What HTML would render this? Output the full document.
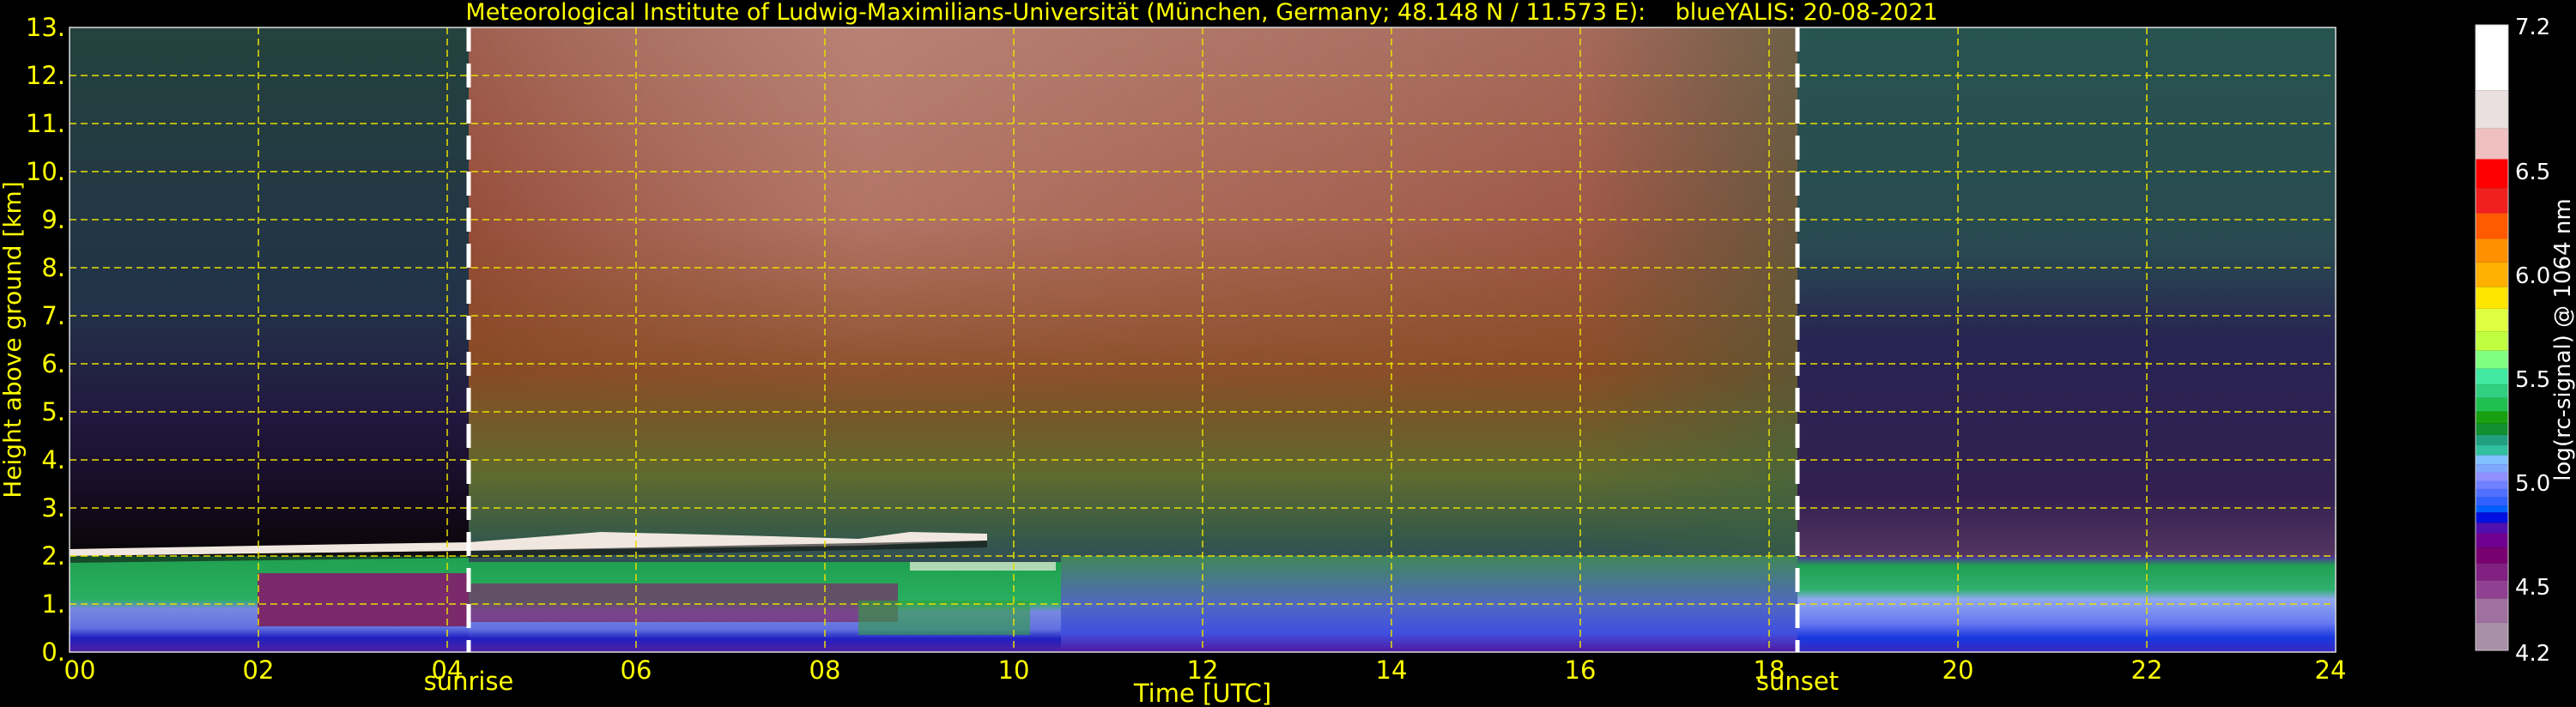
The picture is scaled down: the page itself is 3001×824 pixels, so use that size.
<!DOCTYPE html>
<html><head><meta charset="utf-8"><style>
html,body{margin:0;padding:0;background:#000;width:3001px;height:824px;overflow:hidden}
svg{position:absolute;left:0;top:0}
text{font-family:"DejaVu Sans","Liberation Sans",sans-serif}
</style></head><body>
<svg width="3001" height="824" viewBox="0 0 3001 824">
<defs>
<linearGradient id="gL" x1="0" y1="0" x2="0" y2="1">
<stop offset="0" stop-color="#24423e"/><stop offset="0.45" stop-color="#223248"/>
<stop offset="0.62" stop-color="#221840"/><stop offset="0.75" stop-color="#160c22"/>
<stop offset="0.83" stop-color="#0c060c"/><stop offset="1" stop-color="#0c060c"/>
</linearGradient>
<linearGradient id="gD" x1="0" y1="0" x2="0" y2="1">
<stop offset="0" stop-color="#a06050"/><stop offset="0.3" stop-color="#984e3c"/>
<stop offset="0.55" stop-color="#884a24"/><stop offset="0.72" stop-color="#5e6a30"/>
<stop offset="0.82" stop-color="#34584a"/><stop offset="0.9" stop-color="#303e68"/>
<stop offset="1" stop-color="#303e68"/>
</linearGradient>
<linearGradient id="gW" x1="0" y1="0" x2="1" y2="0">
<stop offset="0" stop-color="#fff" stop-opacity="0"/><stop offset="0.3" stop-color="#f0d0c8" stop-opacity="0.3"/>
<stop offset="0.55" stop-color="#f0d0c8" stop-opacity="0.2"/><stop offset="1" stop-color="#fff" stop-opacity="0"/>
</linearGradient>
<linearGradient id="mV" x1="0" y1="0" x2="0" y2="1">
<stop offset="0" stop-color="#fff"/><stop offset="0.5" stop-color="#fff"/><stop offset="1" stop-color="#000"/>
</linearGradient>
<mask id="mk" maskUnits="userSpaceOnUse" x="546" y="32" width="1548" height="450">
<rect x="546" y="32" width="1548" height="450" fill="url(#mV)"/>
</mask>
<linearGradient id="gT" x1="0" y1="0" x2="1" y2="0">
<stop offset="0" stop-color="#3a6040" stop-opacity="0"/><stop offset="1" stop-color="#3a6040" stop-opacity="0.5"/>
</linearGradient>
<linearGradient id="gR" x1="0" y1="0" x2="0" y2="1">
<stop offset="0" stop-color="#285450"/><stop offset="0.35" stop-color="#284a50"/>
<stop offset="0.5" stop-color="#282452"/><stop offset="0.75" stop-color="#322050"/>
<stop offset="0.88" stop-color="#603c66"/><stop offset="1" stop-color="#684068"/>
</linearGradient>
<linearGradient id="gLB" x1="0" y1="0" x2="0" y2="1">
<stop offset="0" stop-color="#20a050"/><stop offset="0.45" stop-color="#28b060"/>
<stop offset="0.55" stop-color="#7888e0"/><stop offset="0.75" stop-color="#6070e0"/>
<stop offset="0.85" stop-color="#2020c0"/><stop offset="1" stop-color="#5020a0"/>
</linearGradient>
<linearGradient id="gDB" x1="0" y1="0" x2="0" y2="1">
<stop offset="0" stop-color="#408858"/><stop offset="0.5" stop-color="#5068c0"/>
<stop offset="0.8" stop-color="#4050e0"/><stop offset="1" stop-color="#5018a0"/>
</linearGradient>
<linearGradient id="gRB" x1="0" y1="0" x2="0" y2="1">
<stop offset="0" stop-color="#5028a0"/><stop offset="0.1" stop-color="#20a050"/>
<stop offset="0.35" stop-color="#30b070"/><stop offset="0.45" stop-color="#90a8f0"/>
<stop offset="0.7" stop-color="#6878f0"/><stop offset="0.85" stop-color="#1838e0"/><stop offset="1" stop-color="#3828c0"/>
</linearGradient>
</defs>
<rect x="81" y="32" width="465" height="728" fill="url(#gL)"/>
<rect x="546" y="32" width="1548" height="728" fill="url(#gD)"/>
<rect x="546" y="32" width="1548" height="450" fill="url(#gW)" mask="url(#mk)"/>
<rect x="1850" y="32" width="244" height="728" fill="url(#gT)"/>
<rect x="2094" y="32" width="627" height="728" fill="url(#gR)"/>
<rect x="81" y="648" width="465" height="112" fill="url(#gLB)"/>
<rect x="300" y="668" width="246" height="62" fill="#7a2a6a"/>
<rect x="546" y="655" width="690" height="105" fill="url(#gLB)"/>
<rect x="546" y="680" width="500" height="45" fill="#7a2a6a" opacity="0.7"/>
<rect x="1000" y="700" width="200" height="40" fill="#30a040" opacity="0.6"/>
<rect x="1236" y="648" width="858" height="112" fill="url(#gDB)"/>
<rect x="2094" y="648" width="627" height="112" fill="url(#gRB)"/>
<path d="M81 640 L300 636 L546 632 L700 620 L900 625 L1000 628 L1060 620 L1150 622 L1150 630 L1000 636 L546 642 L300 645 L81 648Z" fill="#f0e8e0"/>
<path d="M81 648 L546 642 L1150 630 L1150 638 L546 650 L81 656Z" fill="#101010" opacity="0.6"/>
<rect x="1060" y="655" width="170" height="10" fill="#f0f0e0" opacity="0.7"/>
<g stroke="#e8e000" stroke-width="1.5" stroke-dasharray="8,5" fill="none">
<path d="M81 88H2721M81 144H2721M81 200H2721M81 256H2721M81 312H2721M81 368H2721M81 424H2721M81 480H2721M81 536H2721M81 592H2721M81 648H2721M81 704H2721"/>
<path d="M301 32V760M521 32V760M741 32V760M961 32V760M1181 32V760M1401 32V760M1621 32V760M1841 32V760M2061 32V760M2281 32V760M2501 32V760"/>
</g>
<rect x="81" y="32" width="2640" height="728" fill="none" stroke="#ddd" stroke-width="1.5"/>
<g stroke="#fff" stroke-width="5" stroke-dasharray="28,14"><path d="M546 32V760M2094 32V760"/></g>
<text x="1400" y="23" fill="#ffff00" font-size="27" text-anchor="middle" xml:space="preserve">Meteorological Institute of Ludwig-Maximilians-Universität (München, Germany; 48.148 N / 11.573 E):    blueYALIS: 20-08-2021</text>
<g fill="#ffff00" font-size="29" text-anchor="end">
<text x="76" y="42">13.</text><text x="76" y="98">12.</text><text x="76" y="154">11.</text><text x="76" y="210">10.</text>
<text x="76" y="266">9.</text><text x="76" y="322">8.</text><text x="76" y="378">7.</text><text x="76" y="434">6.</text>
<text x="76" y="490">5.</text><text x="76" y="546">4.</text><text x="76" y="602">3.</text><text x="76" y="658">2.</text>
<text x="76" y="714">1.</text><text x="76" y="770">0.</text>
</g>
<text transform="translate(24,396) rotate(-90)" fill="#ffff00" font-size="28" text-anchor="middle">Height above ground [km]</text>
<g fill="#ffff00" font-size="29" text-anchor="middle">
<text x="93" y="791">00</text><text x="301" y="791">02</text><text x="521" y="791">04</text><text x="741" y="791">06</text>
<text x="961" y="791">08</text><text x="1181" y="791">10</text><text x="1401" y="791">12</text><text x="1621" y="791">14</text>
<text x="1841" y="791">16</text><text x="2061" y="791">18</text><text x="2281" y="791">20</text><text x="2501" y="791">22</text><text x="2715" y="791">24</text>
<text x="546" y="804">sunrise</text><text x="2094" y="804">sunset</text>
<text x="1401" y="818">Time [UTC]</text>
</g>
<svg x="2884" y="29" width="38" height="729" viewBox="0 55 1 1388" preserveAspectRatio="none">
<rect x="0" y="55" width="1" height="145" fill="#ffffff"/>
<rect x="0" y="200" width="1" height="85" fill="#ebe0e0"/>
<rect x="0" y="285" width="1" height="68" fill="#f0c0c0"/>
<rect x="0" y="353" width="1" height="64" fill="#ff0000"/>
<rect x="0" y="417" width="1" height="56" fill="#f02020"/>
<rect x="0" y="473" width="1" height="57" fill="#ff5a00"/>
<rect x="0" y="530" width="1" height="52" fill="#ff9000"/>
<rect x="0" y="582" width="1" height="55" fill="#ffb000"/>
<rect x="0" y="637" width="1" height="48" fill="#ffe600"/>
<rect x="0" y="685" width="1" height="50" fill="#e0ff40"/>
<rect x="0" y="735" width="1" height="43" fill="#c0ff40"/>
<rect x="0" y="778" width="1" height="40" fill="#80ff80"/>
<rect x="0" y="818" width="1" height="35" fill="#40e8a0"/>
<rect x="0" y="853" width="1" height="30" fill="#30d080"/>
<rect x="0" y="883" width="1" height="30" fill="#20c050"/>
<rect x="0" y="913" width="1" height="27" fill="#18a010"/>
<rect x="0" y="940" width="1" height="25" fill="#109030"/>
<rect x="0" y="965" width="1" height="23" fill="#20a080"/>
<rect x="0" y="988" width="1" height="22" fill="#30c0a0"/>
<rect x="0" y="1010" width="1" height="20" fill="#80c0ff"/>
<rect x="0" y="1030" width="1" height="18" fill="#80a8ff"/>
<rect x="0" y="1048" width="1" height="19" fill="#9090ff"/>
<rect x="0" y="1067" width="1" height="18" fill="#7080ff"/>
<rect x="0" y="1085" width="1" height="18" fill="#5070ff"/>
<rect x="0" y="1103" width="1" height="19" fill="#3060ff"/>
<rect x="0" y="1122" width="1" height="15" fill="#0060ff"/>
<rect x="0" y="1137" width="1" height="23" fill="#0010e0"/>
<rect x="0" y="1160" width="1" height="23" fill="#5010b0"/>
<rect x="0" y="1183" width="1" height="32" fill="#700090"/>
<rect x="0" y="1215" width="1" height="35" fill="#780070"/>
<rect x="0" y="1250" width="1" height="38" fill="#802080"/>
<rect x="0" y="1288" width="1" height="40" fill="#904090"/>
<rect x="0" y="1328" width="1" height="54" fill="#a070a0"/>
<rect x="0" y="1382" width="1" height="61" fill="#a890a8"/>
</svg>
<rect x="2884" y="29" width="38" height="729" fill="none" stroke="#ccc" stroke-width="1"/>
<g fill="#fff" font-size="26">
<text x="2930" y="40">7.2</text><text x="2930" y="209">6.5</text><text x="2930" y="330">6.0</text>
<text x="2930" y="451">5.5</text><text x="2930" y="572">5.0</text><text x="2930" y="693">4.5</text><text x="2930" y="770">4.2</text>
</g>
<text transform="translate(2994,396) rotate(-90)" fill="#fff" font-size="26" text-anchor="middle">log(rc-signal) @ 1064 nm</text>
</svg>
</body></html>
